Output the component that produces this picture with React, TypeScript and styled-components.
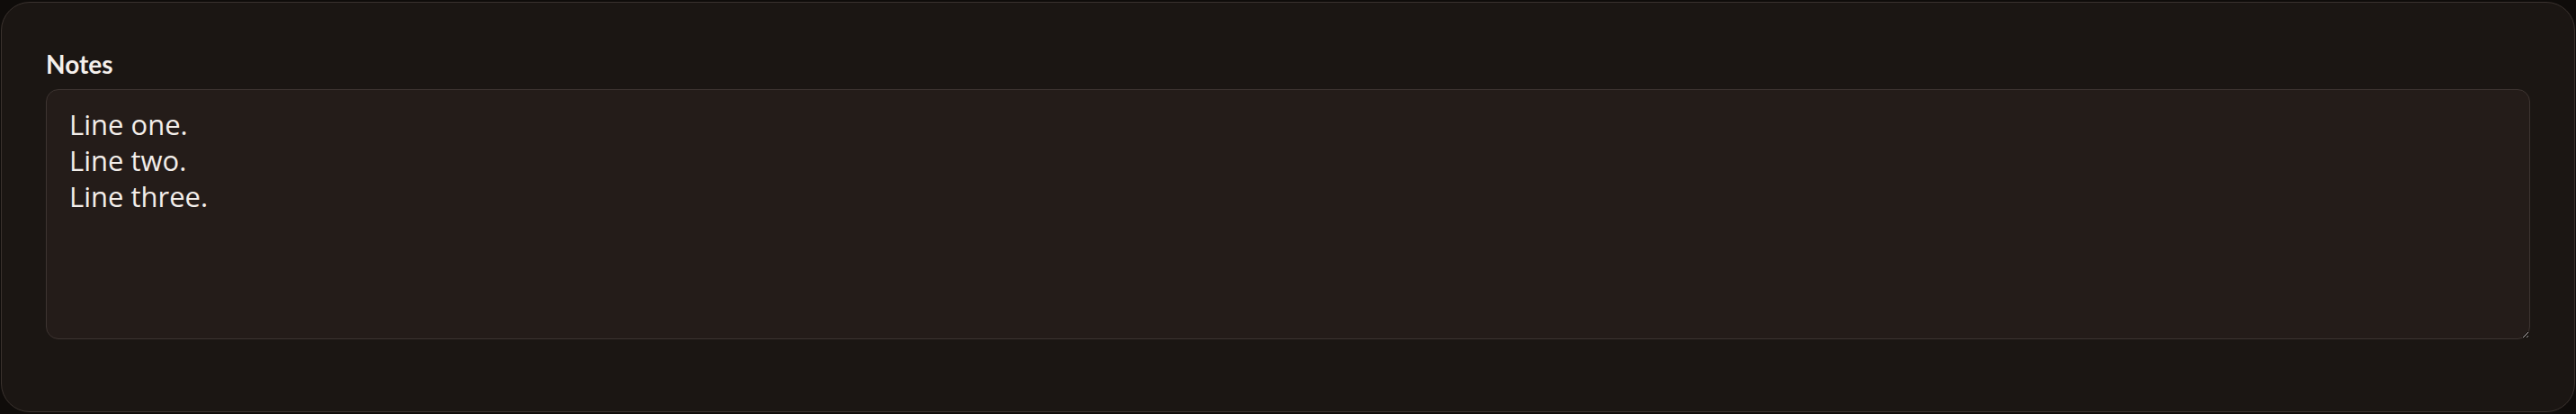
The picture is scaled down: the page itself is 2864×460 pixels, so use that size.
import { FC } from "react";
import styled, { createGlobalStyle } from "styled-components";

const GlobalStyle = createGlobalStyle`
    html, body {
        margin: 0;
        padding: 0;
        background-color: #0f0c0a;
    }
    body {
        font-family: "Lato", "Noto Sans", sans-serif;
        color: #f3eeea;
    }
`

const Page = styled.div`
    padding: 2px 1px;
`

const Card = styled.section`
    display: flex;
    flex-direction: column;
    gap: 8px;
    height: 456px;
    box-sizing: border-box;
    padding: 48px 49px 80px;
    background-color: #1b1613;
    border: 1px solid #3a322e;
    border-radius: 32px;
`

const Label = styled.label`
    font-size: 28px;
    line-height: 40px;
    font-weight: 700;
    color: #f5f0ec;
`

const NotesArea = styled.textarea`
    flex: 1;
    box-sizing: border-box;
    width: 100%;
    margin: 0;
    padding: 18px 25px;
    font-family: "Open Sans", "Lato", sans-serif;
    font-size: 31px;
    line-height: 40px;
    color: #f3eeea;
    background-color: #241c19;
    border: 1px solid #3d3431;
    border-radius: 14px;
    outline: none;
    color-scheme: dark;
`

const App: FC = () => {
    return (
        <Page>
            <GlobalStyle />
            <Card>
                <Label htmlFor="notes">Notes</Label>
                <NotesArea id="notes" defaultValue={"Line one.\nLine two.\nLine three."} />
            </Card>
        </Page>
    )
}

export default App;
